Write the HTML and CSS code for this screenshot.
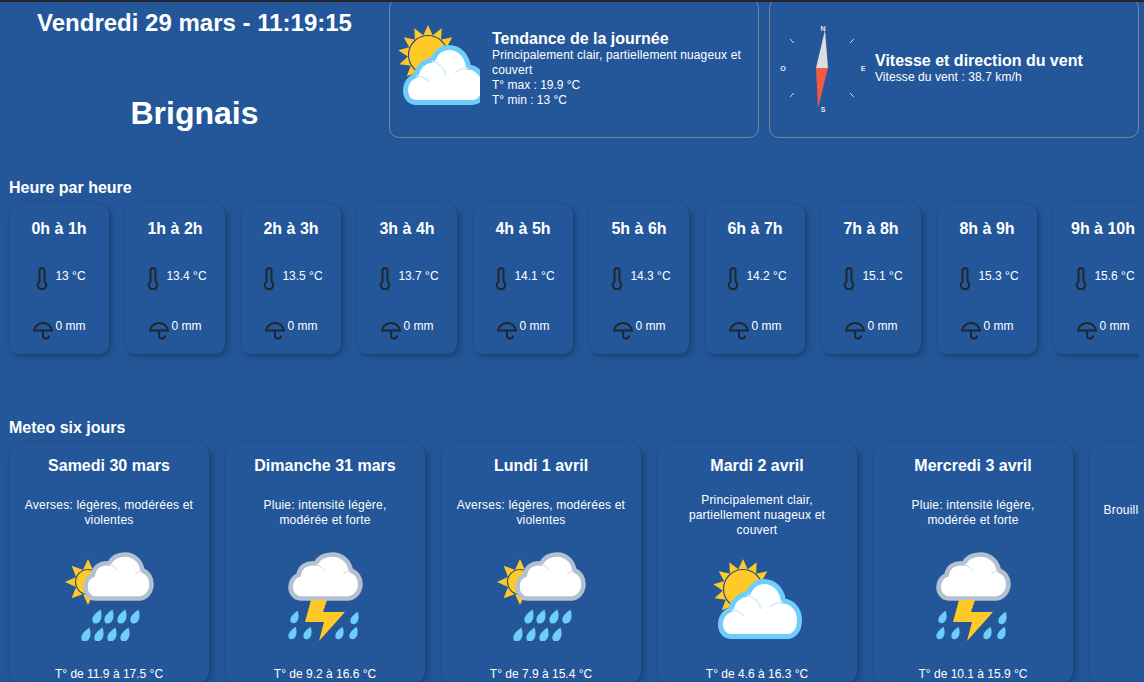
FILE: index.html
```html
<!DOCTYPE html>
<html lang="fr">
<head>
    <meta charset="utf-8">
    <title>Météo Brignais</title>
    <link rel="stylesheet" href="styles.css">
</head>
<body>
    <svg class="sprite" xmlns="http://www.w3.org/2000/svg">
        <symbol id="sun-rays" viewBox="0 0 60 60">
            <g fill="#ffca28">
                <polygon points="30,0 25,11 35,11"/>
                <polygon points="30,0 25,11 35,11" transform="rotate(27 30 30)"/>
                <polygon points="30,0 25,11 35,11" transform="rotate(54 30 30)"/>
                <polygon points="30,0 25,11 35,11" transform="rotate(81 30 30)"/>
                <polygon points="30,0 25,11 35,11" transform="rotate(-27 30 30)"/>
                <polygon points="30,0 25,11 35,11" transform="rotate(-54 30 30)"/>
                <polygon points="30,0 25,11 35,11" transform="rotate(-81 30 30)"/>
                <polygon points="30,0 25,11 35,11" transform="rotate(-108 30 30)"/>
                <polygon points="30,0 25,11 35,11" transform="rotate(-135 30 30)"/>
                <polygon points="30,0 25,11 35,11" transform="rotate(108 30 30)"/>
            </g>
            <circle cx="30" cy="30" r="19.5" fill="#ffca28" stroke="#2c5080" stroke-width="1.2"/>
        </symbol>

        <symbol id="small-sun" viewBox="0 0 46 46">
            <g fill="#ffca28">
                <polygon points="23,0 18,11 28,11"/>
                <polygon points="23,0 18,11 28,11" transform="rotate(45 23 23)"/>
                <polygon points="23,0 18,11 28,11" transform="rotate(90 23 23)"/>
                <polygon points="23,0 18,11 28,11" transform="rotate(135 23 23)"/>
                <polygon points="23,0 18,11 28,11" transform="rotate(180 23 23)"/>
                <polygon points="23,0 18,11 28,11" transform="rotate(225 23 23)"/>
                <polygon points="23,0 18,11 28,11" transform="rotate(270 23 23)"/>
                <polygon points="23,0 18,11 28,11" transform="rotate(315 23 23)"/>
            </g>
            <circle cx="23" cy="23" r="12.500" fill="#ffca28" stroke="#2c5080" stroke-width="1.2"/>
        </symbol>

        <symbol id="partly-cloudy" viewBox="0 0 89 80">
            <use href="#sun-rays" x="0" y="0" width="60" height="60"/>
            <path d="M18 77.5C11.500 77.500 7.500 72 7.500 65.500C7.500 58 12 52.500 18 50.500C20 42 26 36 34.500 35C38 27.500 44 22.500 51 22.500C61.500 22.500 69 30.500 70.500 42C79.500 42.500 86.500 51 86.500 61C86.500 71 81.500 77.500 74 77.500Z" fill="#fff" stroke="#6fcdf9" stroke-width="5"/>
            <path d="M34 36C41 38 46 43 48 50M70 43C65 43 60 45 57 48M18 51C24 51 28 53 31 57" fill="none" stroke="#cdeefc" stroke-width="1.500"/>
        </symbol>

        <symbol id="rain-cloud" viewBox="0 0 71 50">
            <path d="M13 46.500C6 46.500 2.500 41 2.500 35C2.500 29 6 24.500 10 23C11 15 18 10 26 11.500C29 6 35 2.500 42 2.500C51 2.500 58 9 59.500 18.500C65 20 68.500 26 68.500 32C68.500 40 63 46.500 56 46.500Z" fill="#fff" stroke="#b4bfcf" stroke-width="4.500"/>
            <path d="M26 12C30 13.500 33 16 35 19M59 19C56 19 54 20 52 22" fill="none" stroke="#dde3ea" stroke-width="1.200"/>
        </symbol>

        <symbol id="drop" viewBox="0 0 10 15">
            <path d="M8.500 0.500C9.500 4 10 7 9 10C8 13 6 14.500 3.500 14.500C1 14.500 0 12 0.500 9.500C1.200 6 5 3 8.500 0.500Z" fill="#6fcdf9"/>
        </symbol>

        <symbol id="showers" viewBox="0 0 89 89">
            <use href="#small-sun" x="0" y="7" width="46" height="46"/>
            <use href="#rain-cloud" x="18" y="0" width="71" height="50"/>
            <use href="#drop" x="27" y="57" width="10" height="15"/>
            <use href="#drop" x="39" y="57" width="10" height="15"/>
            <use href="#drop" x="52" y="57" width="10" height="15"/>
            <use href="#drop" x="65" y="57" width="10" height="15"/>
            <use href="#drop" x="16" y="75" width="10" height="15"/>
            <use href="#drop" x="29" y="75" width="10" height="15"/>
            <use href="#drop" x="42" y="75" width="10" height="15"/>
            <use href="#drop" x="55" y="75" width="10" height="15"/>
        </symbol>

        <symbol id="storm" viewBox="0 0 75 90">
            <g transform="scale(1.056 1)"><use href="#rain-cloud" width="71" height="50"/></g>
            <polygon points="23,48 39,48 35,60 57,60 31,89 36,70 17,70" fill="#ffca28"/>
            <use href="#drop" x="2" y="58" width="9" height="14"/>
            <use href="#drop" x="62" y="59" width="9" height="14"/>
            <use href="#drop" x="0" y="74" width="9" height="14"/>
            <use href="#drop" x="15" y="74" width="9" height="14"/>
            <use href="#drop" x="47" y="74" width="9" height="14"/>
            <use href="#drop" x="61" y="74" width="9" height="14"/>
        </symbol>

        <symbol id="thermometer" viewBox="0 0 24 24">
            <path d="M9.500 4.500a2.500 2.500 0 0 1 5 0V15.500a4.300 4.300 0 1 1-5 0Z" fill="none" stroke="#1f2630" stroke-width="2"/>
        </symbol>

        <symbol id="umbrella" viewBox="0 0 24 24">
            <path d="M2 14.500h20M3 14.500a9.200 9.500 0 0 1 18 0" fill="none" stroke="#1f2630" stroke-width="2"/>
            <path d="M12 14.500v5a3 3 0 0 0 6 0" fill="none" stroke="#1f2630" stroke-width="2"/>
        </symbol>
    </svg>

    <div class="top-line"></div>

    <div class="header">
        <div class="today">
            <div class="date">Vendredi 29 mars - 11:19:15</div>
            <h1>Brignais</h1>
        </div>

        <div class="box">
            <svg class="trend-icon" width="82" height="80" viewBox="0 0 82 80"><use href="#partly-cloudy" width="89" height="80"/></svg>
            <div class="box-text trend-text">
                <h3>Tendance de la journée</h3>
                <p class="trend-desc">Principalement clair, partiellement nuageux et couvert</p>
                <p>T° max : 19.9 °C</p>
                <p>T° min : 13 °C</p>
            </div>
        </div>

        <div class="box box-wind">
            <svg class="compass" width="90" height="90" viewBox="0 0 90 90">
                <g class="compass-letters">
                    <text x="45" y="7.500">N</text>
                    <text x="45" y="88.500">S</text>
                    <text x="5" y="48">O</text>
                    <text x="85" y="48">E</text>
                </g>
                <g stroke="#d5dbe4" stroke-width="1">
                    <line x1="12" y1="16" x2="16" y2="20"/>
                    <line x1="76" y1="16" x2="72" y2="20"/>
                    <line x1="12" y1="74" x2="16" y2="70"/>
                    <line x1="76" y1="74" x2="72" y2="70"/>
                </g>
                <polygon points="47,7 38,45 50,45" fill="#dddddd"/>
                <polygon points="38,45 50,45 40,85" fill="#f15a40"/>
            </svg>
            <div class="box-text">
                <h3>Vitesse et direction du vent</h3>
                <p class="wind-speed">Vitesse du vent : 38.7 km/h</p>
            </div>
        </div>
    </div>

    <h2 class="section-title">Heure par heure</h2>
    <div class="scroll-row">
        <div class="hour-card">
            <div class="card-title">0h à 1h</div>
            <div class="hour-line line-temp"><svg class="small-icon"><use href="#thermometer"/></svg><span>13 °C</span></div>
            <div class="hour-line line-rain"><svg class="small-icon"><use href="#umbrella"/></svg><span>0 mm</span></div>
        </div>
        <div class="hour-card">
            <div class="card-title">1h à 2h</div>
            <div class="hour-line line-temp"><svg class="small-icon"><use href="#thermometer"/></svg><span>13.4 °C</span></div>
            <div class="hour-line line-rain"><svg class="small-icon"><use href="#umbrella"/></svg><span>0 mm</span></div>
        </div>
        <div class="hour-card">
            <div class="card-title">2h à 3h</div>
            <div class="hour-line line-temp"><svg class="small-icon"><use href="#thermometer"/></svg><span>13.5 °C</span></div>
            <div class="hour-line line-rain"><svg class="small-icon"><use href="#umbrella"/></svg><span>0 mm</span></div>
        </div>
        <div class="hour-card">
            <div class="card-title">3h à 4h</div>
            <div class="hour-line line-temp"><svg class="small-icon"><use href="#thermometer"/></svg><span>13.7 °C</span></div>
            <div class="hour-line line-rain"><svg class="small-icon"><use href="#umbrella"/></svg><span>0 mm</span></div>
        </div>
        <div class="hour-card">
            <div class="card-title">4h à 5h</div>
            <div class="hour-line line-temp"><svg class="small-icon"><use href="#thermometer"/></svg><span>14.1 °C</span></div>
            <div class="hour-line line-rain"><svg class="small-icon"><use href="#umbrella"/></svg><span>0 mm</span></div>
        </div>
        <div class="hour-card">
            <div class="card-title">5h à 6h</div>
            <div class="hour-line line-temp"><svg class="small-icon"><use href="#thermometer"/></svg><span>14.3 °C</span></div>
            <div class="hour-line line-rain"><svg class="small-icon"><use href="#umbrella"/></svg><span>0 mm</span></div>
        </div>
        <div class="hour-card">
            <div class="card-title">6h à 7h</div>
            <div class="hour-line line-temp"><svg class="small-icon"><use href="#thermometer"/></svg><span>14.2 °C</span></div>
            <div class="hour-line line-rain"><svg class="small-icon"><use href="#umbrella"/></svg><span>0 mm</span></div>
        </div>
        <div class="hour-card">
            <div class="card-title">7h à 8h</div>
            <div class="hour-line line-temp"><svg class="small-icon"><use href="#thermometer"/></svg><span>15.1 °C</span></div>
            <div class="hour-line line-rain"><svg class="small-icon"><use href="#umbrella"/></svg><span>0 mm</span></div>
        </div>
        <div class="hour-card">
            <div class="card-title">8h à 9h</div>
            <div class="hour-line line-temp"><svg class="small-icon"><use href="#thermometer"/></svg><span>15.3 °C</span></div>
            <div class="hour-line line-rain"><svg class="small-icon"><use href="#umbrella"/></svg><span>0 mm</span></div>
        </div>
        <div class="hour-card">
            <div class="card-title">9h à 10h</div>
            <div class="hour-line line-temp"><svg class="small-icon"><use href="#thermometer"/></svg><span>15.6 °C</span></div>
            <div class="hour-line line-rain"><svg class="small-icon"><use href="#umbrella"/></svg><span>0 mm</span></div>
        </div>
    </div>

    <h2 class="section-title section-days">Meteo six jours</h2>
    <div class="scroll-row row-days">
        <div class="day-card">
            <div class="card-title">Samedi 30 mars</div>
            <div class="day-desc">Averses: légères, modérées et violentes</div>
            <div class="day-icon"><svg width="89" height="90"><use href="#showers" width="89" height="89"/></svg></div>
            <div class="day-temp">T° de 11.9 à 17.5 °C</div>
        </div>
        <div class="day-card">
            <div class="card-title">Dimanche 31 mars</div>
            <div class="day-desc">Pluie: intensité légère, modérée et forte</div>
            <div class="day-icon"><svg width="75" height="90"><use href="#storm" width="75" height="90"/></svg></div>
            <div class="day-temp">T° de 9.2 à 16.6 °C</div>
        </div>
        <div class="day-card">
            <div class="card-title">Lundi 1 avril</div>
            <div class="day-desc">Averses: légères, modérées et violentes</div>
            <div class="day-icon"><svg width="89" height="90"><use href="#showers" width="89" height="89"/></svg></div>
            <div class="day-temp">T° de 7.9 à 15.4 °C</div>
        </div>
        <div class="day-card">
            <div class="card-title">Mardi 2 avril</div>
            <div class="day-desc desc-three">Principalement clair, partiellement nuageux et couvert</div>
            <div class="day-icon icon-low"><svg width="89" height="80"><use href="#partly-cloudy" width="89" height="80"/></svg></div>
            <div class="day-temp">T° de 4.6 à 16.3 °C</div>
        </div>
        <div class="day-card">
            <div class="card-title">Mercredi 3 avril</div>
            <div class="day-desc">Pluie: intensité légère, modérée et forte</div>
            <div class="day-icon"><svg width="75" height="90"><use href="#storm" width="75" height="90"/></svg></div>
            <div class="day-temp">T° de 10.1 à 15.9 °C</div>
        </div>
        <div class="day-card">
            <div class="card-title">Jeudi 4 avril</div>
            <div class="day-desc desc-one">Brouillard et brouillard givrant</div>
            <div class="day-icon"></div>
            <div class="day-temp">T° de 7.2 à 14.8 °C</div>
        </div>
    </div>
</body>
</html>
```

FILE: styles.css
```css
html {
    overflow: hidden;
}

body {
    margin: 0;
    height: 682px;
    overflow: hidden;
    background-color: #24579a;
    color: white;
    font-family: "Liberation Sans", Arial, sans-serif;
    font-size: 12px;
}

.sprite {
    display: none;
}

.top-line {
    position: relative;
    z-index: 2;
    height: 2px;
    background-color: #23272d;
}

.header {
    display: grid;
    grid-template-columns: 389px 370px 380px;
    height: 140px;
    margin-top: -4px;
}

.today {
    padding-top: 11px;
    text-align: center;
}

.date {
    font-size: 24px;
    font-weight: bold;
    line-height: 28px;
}

h1 {
    margin: 57px 0 0;
    font-size: 32px;
    line-height: 38px;
}

.box {
    display: flex;
    align-items: center;
    box-sizing: border-box;
    height: 140px;
    padding: 0 8px;
    border: 1px solid #76869c;
    border-radius: 10px;
}

.box-wind {
    margin-left: 10px;
}

.trend-icon {
    flex: 0 0 82px;
    margin-top: -6px;
    margin-right: 12px;
}

.compass {
    flex: 0 0 90px;
    margin-right: 7px;
}

.compass-letters text {
    fill: #e4e8ee;
    font-size: 7px;
    font-weight: bold;
    text-anchor: middle;
}

.box-text h3 {
    margin: 0;
    font-size: 16px;
    line-height: 18px;
}

.box-text p {
    margin: 0;
    line-height: 15px;
}

.trend-text {
    padding-top: 2px;
}

.trend-desc {
    letter-spacing: 0.15px;
}

.wind-speed {
    letter-spacing: 0.08px;
}

.section-title {
    margin: 41px 0 0 9px;
    font-size: 16px;
    line-height: 18px;
}

.section-days {
    margin-top: 55px;
}

.scroll-row {
    display: flex;
    gap: 16px;
    width: 1130px;
    padding: 7px 0 10px 9px;
    overflow: hidden;
}

.row-days {
    padding-bottom: 0;
}

.hour-card,
.day-card {
    box-sizing: border-box;
    border-radius: 10px;
    box-shadow: 3px 3px 6px rgba(0, 0, 0, 0.22), 0 0 3px rgba(0, 0, 0, 0.1);
    text-align: center;
}

.hour-card {
    flex: 0 0 100px;
    height: 150px;
    padding-top: 16px;
}

.card-title {
    font-size: 16px;
    font-weight: bold;
    line-height: 18px;
}

.hour-line {
    display: flex;
    justify-content: center;
    gap: 1px;
    padding-right: 2px;
    line-height: 20px;
}

.line-temp {
    margin-top: 28px;
}

.line-rain {
    margin-top: 26px;
}

.small-icon {
    flex: 0 0 24px;
    width: 24px;
    height: 24px;
}

.day-card {
    flex: 0 0 200px;
    height: 238px;
    padding: 13px 14.5px 0;
}

.day-desc {
    display: flex;
    align-items: center;
    justify-content: center;
    box-sizing: border-box;
    height: 60px;
    margin-top: 8px;
    letter-spacing: 0.2px;
    line-height: 15px;
}

.desc-three {
    padding-top: 4px;
}

.desc-one {
    padding: 0 12px 6px 0;
    white-space: nowrap;
}

.day-icon {
    display: flex;
    justify-content: center;
    height: 90px;
    margin-top: 9px;
}

.icon-low {
    height: 83px;
    padding-top: 7px;
}

.day-temp {
    margin-top: 25px;
    line-height: 15px;
}
```
